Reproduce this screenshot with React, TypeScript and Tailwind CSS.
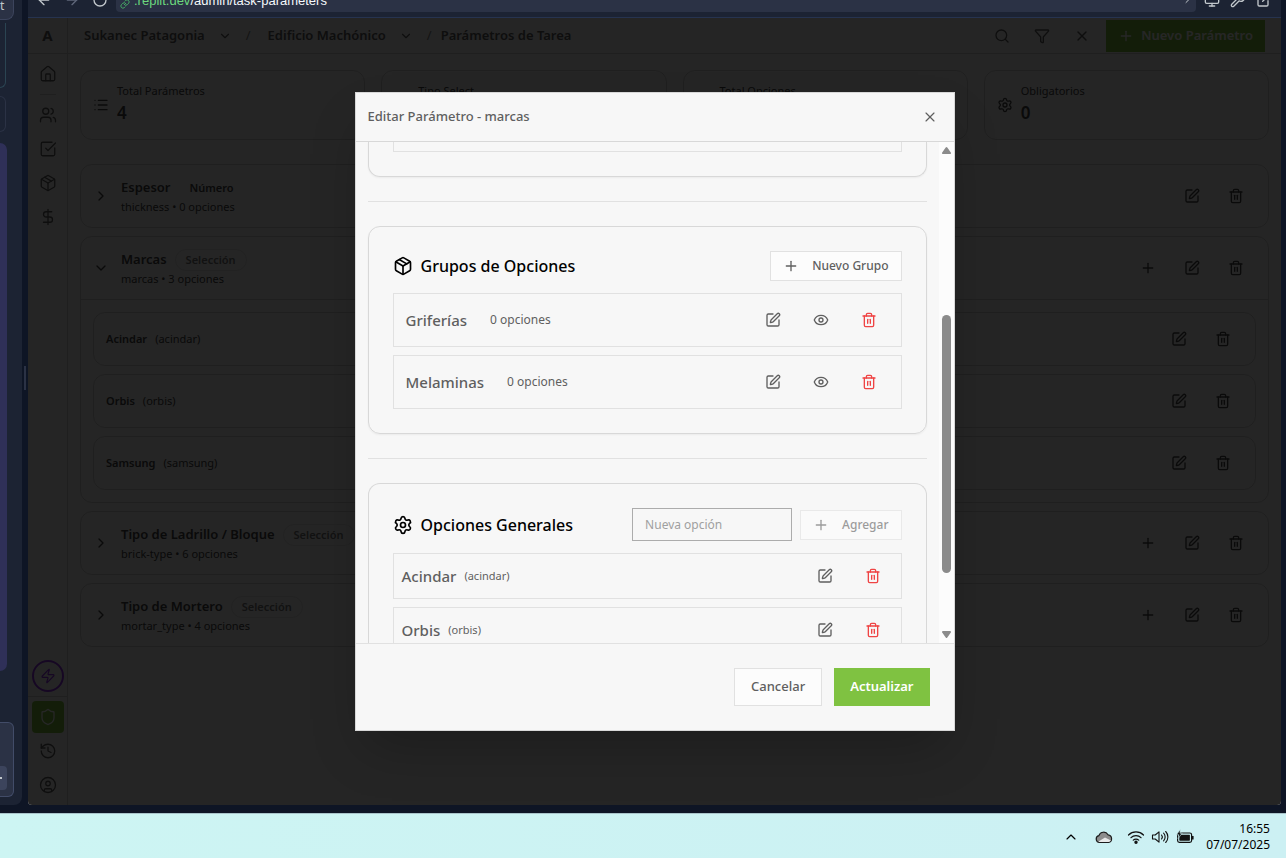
import React from "react";
import {
  ArrowLeft,
  ArrowRight,
  ChevronDown,
  ChevronRight,
  ChevronUp,
  CircleUser,
  DollarSign,
  ExternalLink,
  Eye,
  Filter,
  History,
  House,
  Link,
  List,
  Monitor,
  Package,
  Plus,
  RotateCw,
  Search,
  Settings,
  Shield,
  SquareCheckBig,
  SquarePen,
  Trash2,
  Users,
  Wrench,
  X,
  Zap,
} from "lucide-react";

type IconType = React.ComponentType<{ className?: string; strokeWidth?: number }>;

function IconButton({ label, icon: Icon, className }: { label: string; icon: IconType; className?: string }) {
  return (
    <button type="button" aria-label={label} className={`flex h-[30px] w-10 items-center justify-center ${className ?? ""}`}>
      <Icon className="size-4" />
    </button>
  );
}

/* ---------- Workspace frame ---------- */

function ChatPanel() {
  return (
    <aside className="flex w-[22px] shrink-0 flex-col overflow-hidden rounded-br-lg bg-[#1c2333]">
      <div className="flex h-5 w-[14px] items-start rounded-br-lg border-r border-b border-[#3c445c] bg-[#2b3245] text-[12px] leading-3 text-[#c2c8cc]">t</div>
      <div className="mt-[3px] h-[65px] w-[6px] rounded-br-md border-r border-b border-[#2b4452]" />
      <div className="mt-2 h-9 w-[6px] rounded-r-md border-y border-r border-[#2b3245]" />
      <div className="mt-[11px] mb-[51px] w-[7px] flex-1 rounded-r-lg bg-[#2f3058]" />
      <div className="mb-2 flex h-[75px] w-[14px] items-end rounded-r-md border-y border-r border-[#424c68] bg-[#2b3245] pb-[6px]">
        <div className="flex h-6 w-[7px] items-center rounded-r bg-[#3c445c]">
          <div className="h-[2px] w-[2px] bg-[#c2c8cc]" />
        </div>
      </div>
    </aside>
  );
}

function BrowserBar() {
  return (
    <div className="flex h-[18px] shrink-0 items-start overflow-hidden border-b border-[#26334f] bg-[#1c2333] text-[#c2c8cc]">
      <div className="-mt-2 flex w-[88px] shrink-0 items-center gap-3 pl-2">
        <ArrowLeft className="size-4" />
        <ArrowRight className="size-4 text-[#5f677a]" />
        <RotateCw className="size-4" />
      </div>
      <div className="flex h-3 min-w-0 flex-1 items-end gap-1 overflow-hidden rounded-b bg-[#2b3245] px-1 pb-[3px]">
        <Link className="size-[10px] shrink-0 self-end text-[#4cbf6b]" />
        <span className="flex-1 font-['Liberation_Sans',sans-serif] text-[13px] leading-4 whitespace-nowrap text-[#f5f9fc]">
          <span className="text-[#6cd97e]">.replit.dev</span>/admin/task-parameters
        </span>
        <ArrowRight className="mb-1 size-3 shrink-0" />
      </div>
      <div className="-mt-2 flex shrink-0 items-center gap-[10px] pr-[9px] pl-2">
        <Monitor className="size-4" />
        <Wrench className="size-4" />
        <ExternalLink className="size-4" />
      </div>
    </div>
  );
}

/* ---------- Application ---------- */

function NavButton({ label, icon: Icon }: { label: string; icon: IconType }) {
  return (
    <button type="button" aria-label={label} className="flex size-8 items-center justify-center">
      <Icon className="size-[18px]" strokeWidth={1.75} />
    </button>
  );
}

function Sidebar() {
  return (
    <nav aria-label="Principal" className="flex w-10 shrink-0 flex-col items-center border-r border-[#d0d0d0] text-[#5f5f5f]">
      <div className="flex h-9 w-full shrink-0 items-center justify-center border-b border-[#d0d0d0] text-[15px] font-bold">A</div>
      <div className="flex flex-col items-center gap-[2px] pt-1">
        <NavButton label="Inicio" icon={House} />
        <div className="my-[2px] h-px w-4 bg-[#d0d0d0]" />
        <NavButton label="Contactos" icon={Users} />
        <NavButton label="Tareas" icon={SquareCheckBig} />
        <NavButton label="Materiales" icon={Package} />
        <NavButton label="Finanzas" icon={DollarSign} />
      </div>
      <button type="button" aria-label="Acciones" className="mt-auto mb-1 flex size-8 shrink-0 items-center justify-center rounded-full border-2 border-[#9333ea] text-[#9333ea]">
        <Zap className="size-4" strokeWidth={1.75} />
      </button>
      <div className="flex w-full flex-col items-center gap-[2px] border-t border-[#d0d0d0] py-1">
        <button type="button" aria-label="Administración" className="flex size-8 items-center justify-center rounded bg-[#7fc241] text-white">
          <Shield className="size-[18px]" strokeWidth={1.75} />
        </button>
        <NavButton label="Historial" icon={History} />
        <NavButton label="Perfil" icon={CircleUser} />
      </div>
    </nav>
  );
}

function MenuCrumb({ text }: { text: string }) {
  return (
    <>
      <a href="#crumb" className="px-2 whitespace-nowrap">{text}</a>
      <button type="button" aria-label={`Cambiar ${text}`} className="flex size-6 items-center justify-center">
        <ChevronDown className="size-[14px]" />
      </button>
      <span className="px-[9px] font-normal text-[#888]">/</span>
    </>
  );
}

function TopBar() {
  return (
    <header className="flex h-9 shrink-0 items-center border-b border-[#d0d0d0] px-4 text-[13px] font-semibold text-[#5f5f5f]">
      <div className="-ml-2 flex items-center">
        <MenuCrumb text="Sukanec Patagonia" />
        <MenuCrumb text="Edificio Machónico" />
        <a href="#crumb" className="whitespace-nowrap">Parámetros de Tarea</a>
      </div>
      <div className="ml-auto flex items-center">
        <IconButton label="Buscar" icon={Search} />
        <IconButton label="Filtrar" icon={Filter} />
        <IconButton label="Limpiar" icon={X} />
        <button type="button" className="ml-1 flex h-8 items-center gap-[7px] bg-[#7fc241] px-3 font-semibold whitespace-nowrap text-white">
          <Plus className="size-4" />
          Nuevo Parámetro
        </button>
      </div>
    </header>
  );
}

const stats: { label: string; value: number; icon: IconType }[] = [
  { label: "Total Parámetros", value: 4, icon: List },
  { label: "Tipo Select", value: 3, icon: Package },
  { label: "Total Opciones", value: 13, icon: List },
  { label: "Obligatorios", value: 0, icon: Settings },
];

type Param = { name: string; type: string; slug: string; count: number; plainBadge?: boolean; options?: [string, string][] };

const params: Param[] = [
  { name: "Espesor", type: "Número", slug: "thickness", count: 0, plainBadge: true },
  {
    name: "Marcas",
    type: "Selección",
    slug: "marcas",
    count: 3,
    options: [
      ["Acindar", "acindar"],
      ["Orbis", "orbis"],
      ["Samsung", "samsung"],
    ],
  },
  { name: "Tipo de Ladrillo / Bloque", type: "Selección", slug: "brick-type", count: 6 },
  { name: "Tipo de Mortero", type: "Selección", slug: "mortar_type", count: 4 },
];

function ParamCard({ param }: { param: Param }) {
  const Chevron = param.options ? ChevronDown : ChevronRight;
  return (
    <li className="rounded-xl border border-[#d0d0d0]">
      <div className="flex items-center p-3">
        <button type="button" aria-label={`Desplegar ${param.name}`} className="mr-3">
          <Chevron className="size-4" />
        </button>
        <div className="flex-1">
          <div className="flex h-[22px] items-center gap-2">
            <h3 className="text-[13px] font-semibold">{param.name}</h3>
            <span
              className={
                param.plainBadge
                  ? "flex h-[22px] items-center rounded-full border border-transparent px-[10px] text-[11px] font-semibold"
                  : "flex h-[22px] items-center rounded-full border border-[#e0e0e0] px-[10px] text-[11px] font-semibold text-[#777]"
              }
            >
              {param.type}
            </span>
          </div>
          <p className="text-[11px] leading-4">
            {param.slug} • {param.count} opciones
          </p>
        </div>
        <div className="flex gap-1">
          {!param.plainBadge && <IconButton label="Agregar opción" icon={Plus} />}
          <IconButton label="Editar" icon={SquarePen} />
          <IconButton label="Eliminar" icon={Trash2} />
        </div>
      </div>
      {param.options && (
        <ul className="flex flex-col gap-2 border-t border-[#d0d0d0] p-3">
          {param.options.map(([name, slug]) => (
            <li key={slug} className="flex items-center rounded-xl border border-[#d0d0d0] px-3 py-[11px] text-[11px]">
              <span className="font-semibold">{name}</span>
              <span className="ml-2">({slug})</span>
              <div className="ml-auto flex gap-1">
                <IconButton label={`Editar ${name}`} icon={SquarePen} />
                <IconButton label={`Eliminar ${name}`} icon={Trash2} />
              </div>
            </li>
          ))}
        </ul>
      )}
    </li>
  );
}

function AdminPage() {
  return (
    <div className="flex h-full bg-[#f7f7f7] text-[#444]">
      <Sidebar />
      <div className="flex min-w-0 flex-1 flex-col">
        <TopBar />
        <main className="flex-1 overflow-hidden px-3 pt-4">
          <dl className="mb-6 grid grid-cols-4 gap-4">
            {stats.map(({ label, value, icon: Icon }) => (
              <div key={label} className="flex h-[70px] items-center gap-2 rounded-xl border border-[#d0d0d0] px-3">
                <Icon className="size-4" />
                <div>
                  <dt className="text-[11px] leading-4">{label}</dt>
                  <dd className="text-[17px] leading-7 font-semibold">{value}</dd>
                </div>
              </div>
            ))}
          </dl>
          <ul className="flex flex-col gap-2">
            {params.map((param) => (
              <ParamCard key={param.slug} param={param} />
            ))}
          </ul>
        </main>
      </div>
    </div>
  );
}

/* ---------- Edit dialog ---------- */

const groups = ["Griferías", "Melaminas"];
const generalOptions: [string, string][] = [
  ["Acindar", "acindar"],
  ["Orbis", "orbis"],
];

function ScrollRail() {
  return (
    <div aria-hidden="true" className="flex w-[15px] shrink-0 flex-col items-center bg-[#fcfcfc] py-[5px]">
      <svg viewBox="0 0 9 7" className="h-[7px] w-[9px] shrink-0 fill-[#8b8b8b]">
        <path d="M3.700.6a1 1 0 0 1 1.600 0L8.800 5.400A1 1 0 0 1 8 7H1a1 1 0 0 1-.8-1.600z" />
      </svg>
      <div className="w-full flex-[161]" />
      <div className="w-[9px] flex-[258] rounded-full bg-[#8b8b8b]" />
      <div className="w-full flex-[58]" />
      <svg viewBox="0 0 9 7" className="h-[7px] w-[9px] shrink-0 rotate-180 fill-[#8b8b8b]">
        <path d="M3.700.6a1 1 0 0 1 1.600 0L8.800 5.400A1 1 0 0 1 8 7H1a1 1 0 0 1-.8-1.600z" />
      </svg>
    </div>
  );
}

function EditDialog() {
  return (
    <section
      role="dialog"
      aria-modal="true"
      aria-labelledby="dialog-title"
      className="flex max-h-[639px] w-full max-w-[600px] flex-col border border-[#d8d8d8] bg-[#f7f7f7] text-[#5f5f5f] shadow-2xl"
    >
      <header className="flex h-[49px] shrink-0 items-center justify-between border-b border-[#d8d8d8] pr-4 pl-3">
        <h2 id="dialog-title" className="text-[13px] font-medium">Editar Parámetro - marcas</h2>
        <button type="button" aria-label="Cerrar">
          <X className="size-4" strokeWidth={1.75} />
        </button>
      </header>

      <div className="flex min-h-0 flex-1 overflow-hidden">
        <div className="min-w-0 flex-1 px-3">
          <div className="rounded-b-xl border-x border-b border-[#d8d8d8] px-6 pb-6 shadow-xs">
            <div className="h-[10px] border-x border-b border-[#e1e1e1]" />
          </div>

          <hr className="my-6 border-[#e1e1e1]" />

          <div className="rounded-xl border border-[#d8d8d8] p-6 shadow-xs">
            <div className="mb-3 flex items-center justify-between">
              <h3 className="flex items-center gap-2 text-[16px] font-medium text-black">
                <Package className="size-5" />
                Grupos de Opciones
              </h3>
              <button type="button" className="flex h-[30px] items-center gap-[13px] border border-[#e1e1e1] bg-[#fcfcfc] px-3 text-[12px] font-medium">
                <Plus className="size-4" />
                Nuevo Grupo
              </button>
            </div>
            <ul className="flex flex-col gap-2">
              {groups.map((name) => (
                <li key={name} className="flex h-[54px] items-center border border-[#e1e1e1] px-3">
                  <span className="text-[15px] font-medium">{name}</span>
                  <span className="ml-3 px-[11px] text-[12px]">0 opciones</span>
                  <div className="ml-auto flex gap-2">
                    <IconButton label={`Editar ${name}`} icon={SquarePen} />
                    <IconButton label={`Ver ${name}`} icon={Eye} />
                    <IconButton label={`Eliminar ${name}`} icon={Trash2} className="text-[#ef4444]" />
                  </div>
                </li>
              ))}
            </ul>
          </div>

          <hr className="my-6 border-[#e1e1e1]" />

          <div className="rounded-t-xl border-x border-t border-[#d8d8d8] px-6 pt-6">
            <div className="mb-3 flex items-center gap-2">
              <h3 className="mr-auto flex items-center gap-2 text-[16px] font-medium text-black">
                <Settings className="size-5" />
                Opciones Generales
              </h3>
              <input
                type="text"
                aria-label="Nueva opción"
                placeholder="Nueva opción"
                className="h-[33px] w-40 border border-[#acacac] bg-transparent px-3 text-[12px] placeholder:text-[#a0a0a0]"
              />
              <button type="button" disabled className="flex h-[30px] items-center gap-[13px] border border-[#e1e1e1] bg-[#fcfcfc] px-3 text-[12px] font-medium opacity-60">
                <Plus className="size-4" />
                Agregar
              </button>
            </div>
            <ul className="flex flex-col gap-2">
              {generalOptions.map(([name, slug]) => (
                <li key={slug} className="flex h-[46px] items-center border border-[#e1e1e1] px-2">
                  <span className="text-[15px] font-medium">{name}</span>
                  <span className="ml-2 text-[11px]">({slug})</span>
                  <div className="ml-auto flex gap-2">
                    <IconButton label={`Editar ${name}`} icon={SquarePen} />
                    <IconButton label={`Eliminar ${name}`} icon={Trash2} className="text-[#ef4444]" />
                  </div>
                </li>
              ))}
            </ul>
          </div>
        </div>
        <ScrollRail />
      </div>

      <footer className="flex shrink-0 justify-end gap-3 border-t border-[#e1e1e1] p-6 text-[13px]">
        <button type="button" className="h-[38px] border border-[#e1e1e1] bg-[#fcfcfc] px-4 font-medium">Cancelar</button>
        <button type="button" className="h-[38px] bg-[#7fc241] px-4 font-semibold text-white">Actualizar</button>
      </footer>
    </section>
  );
}

/* ---------- Taskbar ---------- */

function Taskbar() {
  return (
    <footer className="flex h-[45px] shrink-0 items-center justify-end border-t border-[#a9c4ca] bg-linear-to-r from-[#cdf5f3] to-[#ccf0f3] pt-[2px] pr-4 text-black">
      <ChevronUp className="mr-4 size-4" strokeWidth={1.75} />
      <svg viewBox="0 0 18 14" className="mr-[14px] h-[14px] w-[18px]">
        <path d="M4.500 12.500a3.500 3.500 0 0 1-.6-6.900A5 5 0 0 1 13 4.800a3.900 3.900 0 0 1 .5 7.700z" fill="#8d8d8d" stroke="#1d1d1d" strokeWidth="1.200" />
        <path d="M3.500 11.400 10 7.400l6 3.200a3 3 0 0 1-2.500 1.300h-9z" fill="#e9e9e9" />
      </svg>
      <svg viewBox="0 0 18 16" className="mr-[6px] h-4 w-[18px]" fill="none" stroke="#111" strokeWidth="1.200" strokeLinecap="round">
        <path d="M1.500 6a10.600 10.600 0 0 1 15 0M4 8.700a7 7 0 0 1 10 0M6.300 11.200a3.800 3.800 0 0 1 5.400 0" />
        <circle cx="9" cy="13.200" r="1.100" fill="#111" />
      </svg>
      <svg viewBox="0 0 18 16" className="mr-[7px] h-4 w-[18px]" fill="none" stroke="#111" strokeWidth="1.100" strokeLinecap="round" strokeLinejoin="round">
        <path d="M1.500 6v4h2.700L8 13.200V2.800L4.200 6zM10.500 6a3 3 0 0 1 0 4M12.600 4.200a5.500 5.500 0 0 1 0 7.600M14.700 2.500a8 8 0 0 1 0 11" />
      </svg>
      <svg viewBox="0 0 18 16" className="mr-3 h-4 w-[18px]">
        <rect x="1.600" y="4" width="14" height="9.400" rx="1.800" fill="none" stroke="#111" strokeWidth="1.200" />
        <rect x="3.300" y="5.700" width="10.600" height="6" rx=".6" fill="#111" />
        <path d="M16 7h1.600v3.400H16z" fill="#111" />
        <path d="M4.200.4.600 5.800h2.200L2 9.600l4.200-5.400H4z" fill="#111" stroke="#ccf0f3" strokeWidth=".6" />
      </svg>
      <div className="text-right text-[12px] leading-4">
        <div>16:55</div>
        <div>07/07/2025</div>
      </div>
    </footer>
  );
}

export default function App() {
  return (
    <div className="flex h-screen flex-col overflow-hidden bg-[#0e1525] font-['Noto_Sans','Open_Sans',sans-serif]">
      <div className="flex min-h-0 flex-1 pr-[5px] pb-2">
        <ChatPanel />
        <div className="flex w-[6px] shrink-0 items-center justify-center">
          <div className="mt-[-49px] h-6 w-[2px] bg-[#2b3245]" />
        </div>
        <div className="flex min-w-0 flex-1 flex-col">
          <BrowserBar />
          <div className="relative min-h-0 flex-1 overflow-hidden rounded-b">
            <AdminPage />
            <div className="absolute inset-0 flex items-center justify-center bg-black/85">
              <EditDialog />
            </div>
          </div>
        </div>
      </div>
      <Taskbar />
    </div>
  );
}
